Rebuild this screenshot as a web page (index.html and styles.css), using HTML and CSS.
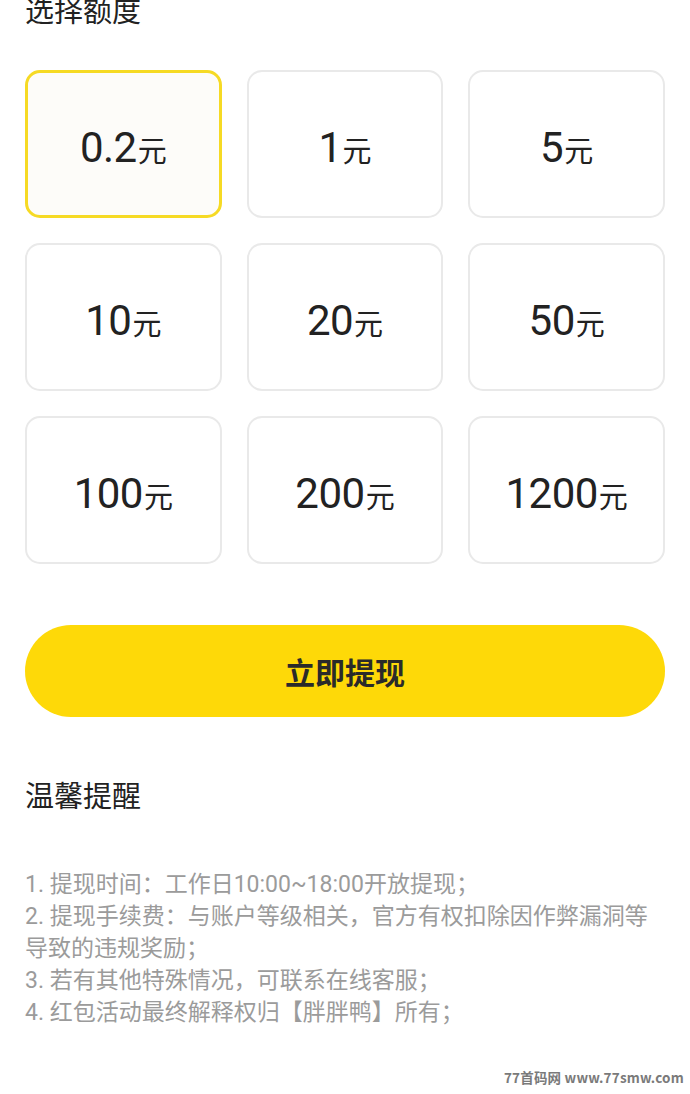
FILE: index.html
```html
<!DOCTYPE html>
<html lang="zh-CN">
<head>
<meta charset="utf-8">
<title>选择额度</title>
<link rel="stylesheet" href="styles.css">
</head>
<body>
<div class="page">
  <h2 class="title title-top">选择额度</h2>
  <div class="grid">
    <div class="card selected"><p class="amount"><span class="num">0.2</span><span class="unit">元</span></p></div>
    <div class="card"><p class="amount"><span class="num">1</span><span class="unit">元</span></p></div>
    <div class="card"><p class="amount"><span class="num">5</span><span class="unit">元</span></p></div>
    <div class="card"><p class="amount"><span class="num">10</span><span class="unit">元</span></p></div>
    <div class="card"><p class="amount"><span class="num">20</span><span class="unit">元</span></p></div>
    <div class="card"><p class="amount"><span class="num">50</span><span class="unit">元</span></p></div>
    <div class="card"><p class="amount"><span class="num">100</span><span class="unit">元</span></p></div>
    <div class="card"><p class="amount"><span class="num">200</span><span class="unit">元</span></p></div>
    <div class="card"><p class="amount"><span class="num">1200</span><span class="unit">元</span></p></div>
  </div>
  <button class="btn">立即提现</button>
  <h2 class="title title-tips">温馨提醒</h2>
  <div class="notes">
    <p>1. 提现时间：工作日10:00~18:00开放提现；</p>
    <p>2. 提现手续费：与账户等级相关，官方有权扣除因作弊漏洞等导致的违规奖励；</p>
    <p>3. 若有其他特殊情况，可联系在线客服；</p>
    <p>4. 红包活动最终解释权归【胖胖鸭】所有；</p>
  </div>
</div>
<div class="watermark">77首码网 www.77smw.com</div>
</body>
</html>
```
FILE: styles.css
```css
html, body {
  margin: 0;
  padding: 0;
  background: #ffffff;
}
body {
  width: 690px;
  height: 1094px;
  overflow: hidden;
  position: relative;
  font-family: Roboto, "Noto Sans CJK SC", sans-serif;
  color: #222222;
}
.page {
  padding: 0 25px;
}
.title {
  margin: 0;
  font-family: "Noto Sans CJK SC", sans-serif;
  font-weight: 400;
  font-size: 29px;
  line-height: 29px;
  color: #222222;
}
.title-top {
  margin-top: -5px;
}
.grid {
  margin-top: 46px;
  display: grid;
  grid-template-columns: repeat(3, 1fr);
  column-gap: 25px;
  row-gap: 25px;
}
.card {
  box-sizing: border-box;
  height: 148px;
  border: 2px solid #e9e9e9;
  border-radius: 15px;
  display: flex;
  align-items: center;
  justify-content: center;
  background: #ffffff;
}
.card.selected {
  border: 3px solid #f6da24;
  background: #fdfcf9;
}
.amount {
  margin: 0;
  line-height: 44px;
  padding-top: 16px;
  white-space: nowrap;
}
.num {
  font-family: Roboto, sans-serif;
  font-size: 42px;
  color: #222222;
  letter-spacing: -0.5px;
}
.unit {
  font-family: "Noto Sans CJK SC", sans-serif;
  font-size: 29px;
  color: #222222;
  margin-left: 1px;
}
.btn {
  display: block;
  width: 100%;
  height: 92px;
  margin-top: 61px;
  border: none;
  border-radius: 46px;
  background: #fed908;
  font-family: "Noto Sans CJK SC", sans-serif;
  font-size: 30px;
  font-weight: 700;
  color: #2a2a2a;
  padding: 0;
}
.title-tips {
  margin-top: 63px;
}
.notes {
  margin-top: 60px;
  font-family: Roboto, "Noto Sans CJK SC", sans-serif;
  font-size: 23px;
  line-height: 32px;
  color: #9b9b9b;
}
.notes p {
  margin: 0;
}
.watermark {
  position: absolute;
  right: 6px;
  bottom: 7px;
  font-family: "Noto Sans CJK SC", sans-serif;
  font-weight: 700;
  font-size: 13.5px;
  color: #7a7a7a;
  letter-spacing: 0.2px;
}
```
